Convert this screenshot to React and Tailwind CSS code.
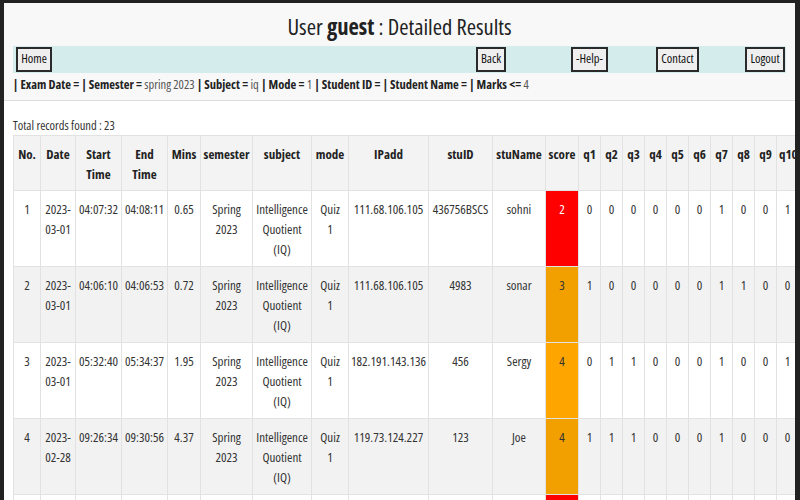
import React from "react";

const headers = [
  { label: ["No."], w: "w-[27px]" },
  { label: ["Date"], w: "w-[35px]" },
  { label: ["Start", "Time"], w: "w-[46px]" },
  { label: ["End", "Time"], w: "w-[46px]" },
  { label: ["Mins"], w: "w-[33px]" },
  { label: ["semester"], w: "w-[52px]" },
  { label: ["subject"], w: "w-[59px]" },
  { label: ["mode"], w: "w-[37px]" },
  { label: ["IPadd"], w: "w-[80px]" },
  { label: ["stuID"], w: "w-[64px]" },
  { label: ["stuName"], w: "w-[53px]" },
  { label: ["score"], w: "w-[33px]" },
  { label: ["q1"], w: "w-[22px]" },
  { label: ["q2"], w: "w-[22px]" },
  { label: ["q3"], w: "w-[22px]" },
  { label: ["q4"], w: "w-[22px]" },
  { label: ["q5"], w: "w-[22px]" },
  { label: ["q6"], w: "w-[22px]" },
  { label: ["q7"], w: "w-[22px]" },
  { label: ["q8"], w: "w-[22px]" },
  { label: ["q9"], w: "w-[22px]" },
  { label: ["q10"], w: "w-[22px]" },
  { label: ["q11"], w: "w-[22px]" },
  { label: ["q12"], w: "w-[22px]" },
];

const rows = [
  { no: "1", date: ["2023-", "03-01"], start: "04:07:32", end: "04:08:11", mins: "0.65", ip: "111.68.106.105", id: "436756BSCS", name: "sohni", score: 2, q: [0, 0, 0, 0, 0, 0, 1, 0, 0, 1, 0, 0] },
  { no: "2", date: ["2023-", "03-01"], start: "04:06:10", end: "04:06:53", mins: "0.72", ip: "111.68.106.105", id: "4983", name: "sonar", score: 3, q: [1, 0, 0, 0, 0, 0, 1, 1, 0, 0, 0, 0] },
  { no: "3", date: ["2023-", "03-01"], start: "05:32:40", end: "05:34:37", mins: "1.95", ip: "182.191.143.136", id: "456", name: "Sergy", score: 4, q: [0, 1, 1, 0, 0, 0, 1, 0, 0, 1, 0, 0] },
  { no: "4", date: ["2023-", "02-28"], start: "09:26:34", end: "09:30:56", mins: "4.37", ip: "119.73.124.227", id: "123", name: "Joe", score: 4, q: [1, 1, 1, 0, 0, 0, 1, 0, 0, 0, 0, 0] },
  { no: "5", date: ["2023-", "02-28"], start: "09:20:11", end: "09:22:40", mins: "2.48", ip: "119.73.124.227", id: "123", name: "Joe", score: 2, q: [0, 1, 0, 0, 0, 0, 1, 0, 0, 0, 0, 0] },
];

const Lines = ({ lines }) =>
  lines.map((l, i) => (
    <React.Fragment key={i}>
      {i > 0 && <br />}
      {l}
    </React.Fragment>
  ));

const Cell = ({ children, className = "" }) => (
  <td className={`border border-[#e2e2e2] px-[2px] pt-2 pb-[7px] align-top text-center whitespace-nowrap ${className}`}>{children}</td>
);

const scoreClass = (score, striped) => {
  if (score <= 2) return "bg-[#ff0000] text-white";
  return striped ? "bg-[#f2a000] text-[#333]" : "bg-[#ffa500] text-[#333]";
};

const NavButton = ({ label, className }) => (
  <button className={`h-[25px] border-2 border-[#2a2a2a] bg-[#efefef] text-[12.5px] leading-none text-[#111] ${className}`}>{label}</button>
);

export default function App() {
  return (
    <div className="h-[500px] overflow-hidden bg-[#222] pl-[4px] pt-[3px] pr-[5px] font-['Open_Sans',sans-serif] font-stretch-condensed">
      <div className="h-full overflow-hidden bg-white text-[#333]">
        <div className="border-b border-[#dddddd] bg-[#f8f8f8] px-[9px] pb-[5px]">
          <h1 className="pt-[10px] text-center text-[22.5px] leading-[28px] text-[#222]">
            User <b>guest</b> : Detailed Results
          </h1>
          <div className="mt-[5px] flex h-[27px] items-center bg-[#d5ecec]">
            <NavButton label="Home" className="ml-[3px] w-[36px]" />
            <NavButton label="Back" className="ml-[424px] w-[30px]" />
            <NavButton label="-Help-" className="ml-[65px] w-[37px]" />
            <NavButton label="Contact" className="ml-[48px] w-[43px]" />
            <NavButton label="Logout" className="ml-[46px] w-[40px]" />
          </div>
          <p className="mt-[2px] text-[12.5px] leading-[20px] text-[#222]">
            <b>| Exam Date = | Semester =</b> <span className="text-[#555]">spring 2023</span> <b>| Subject =</b>{" "}
            <span className="text-[#555]">iq</span> <b>| Mode =</b> <span className="text-[#555]">1</span>{" "}
            <b>| Student ID = | Student Name = | Marks &lt;=</b> <span className="text-[#555]">4</span>
          </p>
        </div>

        <div className="px-[9px] pt-[16px]">
          <p className="text-[12.5px] leading-[18px] text-[#333]">Total records found : 23</p>
          <table className="w-[829px] table-fixed border-collapse text-[13px] leading-[20px]">
            <thead>
              <tr className="bg-[#f3f3f3]">
                {headers.map((h, i) => (
                  <th key={i} className={`${h.w} border border-[#e2e2e2] px-[2px] pt-2 pb-[6px] align-top text-center whitespace-nowrap font-bold text-[#222]`}>
                    <Lines lines={h.label} />
                  </th>
                ))}
              </tr>
            </thead>
            <tbody>
              {rows.map((r, i) => {
                const striped = i % 2 === 1;
                return (
                  <tr key={r.no} className={striped ? "bg-[#f2f2f2]" : "bg-white"}>
                    <Cell>{r.no}</Cell>
                    <Cell><Lines lines={r.date} /></Cell>
                    <Cell>{r.start}</Cell>
                    <Cell>{r.end}</Cell>
                    <Cell>{r.mins}</Cell>
                    <Cell><Lines lines={["Spring", "2023"]} /></Cell>
                    <Cell><Lines lines={["Intelligence", "Quotient", "(IQ)"]} /></Cell>
                    <Cell><Lines lines={["Quiz", "1"]} /></Cell>
                    <Cell>{r.ip}</Cell>
                    <Cell>{r.id}</Cell>
                    <Cell>{r.name}</Cell>
                    <Cell className={scoreClass(r.score, striped)}>{r.score}</Cell>
                    {r.q.map((v, j) => (
                      <Cell key={j}>{v}</Cell>
                    ))}
                  </tr>
                );
              })}
            </tbody>
          </table>
        </div>
      </div>
    </div>
  );
}
